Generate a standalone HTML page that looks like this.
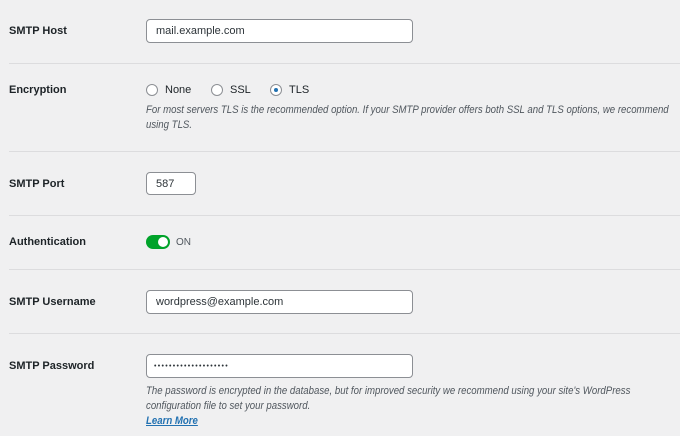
<!DOCTYPE html>
<html><head><style>
body{margin:0;width:680px;height:436px;background:#f0f0f1;font-family:"Liberation Sans",Arial,sans-serif;color:#1d2327;overflow:hidden;position:relative}
.a{position:absolute}
.lbl{left:9px;font-size:11px;font-weight:bold}
.hr{left:9px;right:0;height:1px;background:#dcdcde}
.in{left:146px;background:#fff;border:1px solid #8c8f94;border-radius:4px;box-sizing:border-box;font-size:11px;color:#2c3338;padding-left:9px;display:flex;align-items:center}
.desc{left:146px;font-size:11px;font-style:italic;color:#50575e;line-height:15px;white-space:nowrap;transform:scaleX(0.875);transform-origin:0 0}
.r{width:12px;height:12px;border:1px solid #8c8f94;border-radius:50%;background:#fff;box-sizing:border-box}
.rt{font-size:11px}
</style></head><body>
<div class="a lbl" style="top:25px">SMTP Host</div>
<div class="a in" style="top:19px;width:267px;height:24px">mail.example.com</div>
<div class="a hr" style="top:63px"></div>

<div class="a lbl" style="top:84px">Encryption</div>
<div class="a r" style="left:146px;top:84px"></div><div class="a rt" style="left:165px;top:84px">None</div>
<div class="a r" style="left:211px;top:84px"></div><div class="a rt" style="left:230px;top:84px">SSL</div>
<div class="a r" style="left:270px;top:84px"><div style="width:4px;height:4px;border-radius:50%;background:#2271b1;margin:3px"></div></div><div class="a rt" style="left:289px;top:84px">TLS</div>
<div class="a desc" style="top:103px">For most servers TLS is the recommended option. If your SMTP provider offers both SSL and TLS options, we recommend<br>using TLS.</div>
<div class="a hr" style="top:151px"></div>

<div class="a lbl" style="top:178px">SMTP Port</div>
<div class="a in" style="top:172px;width:50px;height:23px">587</div>
<div class="a hr" style="top:215px"></div>

<div class="a lbl" style="top:236px">Authentication</div>
<div class="a" style="left:146px;top:235px;width:24px;height:14px;border-radius:7px;background:#00a32a"><div style="position:absolute;right:2px;top:2px;width:10px;height:10px;border-radius:50%;background:#fff"></div></div>
<div class="a rt" style="left:176px;top:237px;font-size:10px;color:#50575e">ON</div>
<div class="a hr" style="top:269px"></div>

<div class="a lbl" style="top:296px">SMTP Username</div>
<div class="a in" style="top:290px;width:267px;height:24px">wordpress@example.com</div>
<div class="a hr" style="top:333px"></div>

<div class="a lbl" style="top:360px">SMTP Password</div>
<div class="a in" style="top:354px;width:267px;height:24px;font-size:7px;letter-spacing:1.3px;padding-left:7px">••••••••••••••••••••</div>
<div class="a desc" style="top:384px">The password is encrypted in the database, but for improved security we recommend using your site's WordPress<br>configuration file to set your password.<br><span style="color:#2271b1;text-decoration:underline;font-weight:bold">Learn More</span></div>
</body></html>
